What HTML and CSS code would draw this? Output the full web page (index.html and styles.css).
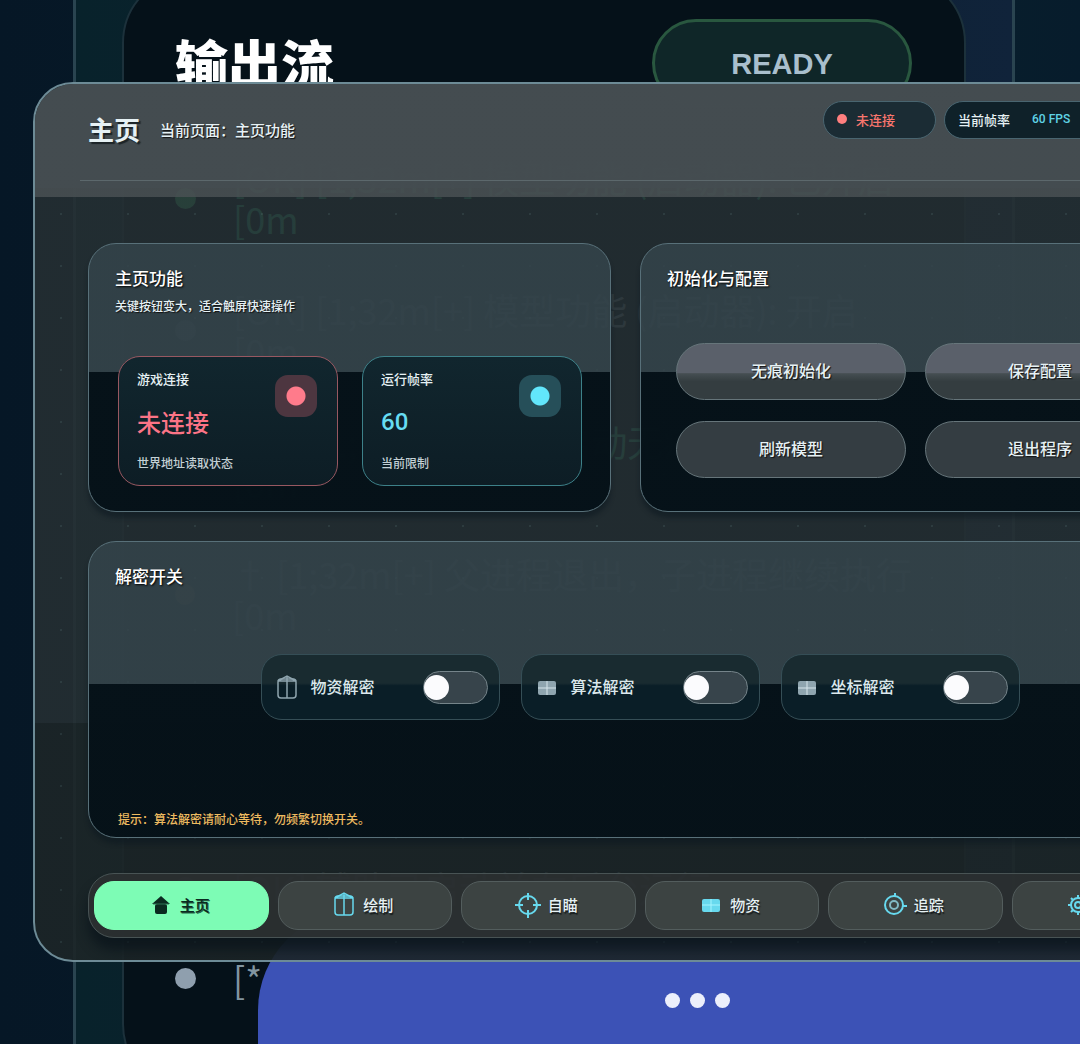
FILE: index.html
```html
<!DOCTYPE html>
<html lang="zh-CN">
<head>
    <meta charset="UTF-8">
    <meta name="viewport" content="width=device-width, initial-scale=1.0">
    <title>主页</title>
    <link rel="stylesheet" href="styles.css">
</head>
<body>
    <div class="stage">
        <!-- 后面的输出窗口 -->
        <div class="backdrop">
            <section class="console">
                <div class="console-head">
                    <h2>输出流</h2>
                    <span class="ready">READY</span>
                </div>
                <ul class="log">
                    <li class="ok"><span>[OK] [1;32m[+] 模型功能 (启动器): 已开启<br>[0m</span></li>
                    <li><span>[OK] [1;32m[+] 模型功能 (启动器): 开启<br>[0m</span></li>
                    <li class="ok"><span>[OK] [1;32m[+] 模型启动无痕<br>[0m</span></li>
                    <li class="warn"><span>† [1;32m[+] 父进程退出，子进程继续执行<br>[0m</span></li>
                    <li><span></span></li>
                    <li><span></span></li>
                    <li><span>[OK] 辅助已启动并在后台运行</span></li>
                    <li><span>[*</span></li>
                </ul>
            </section>
        </div>
        <div class="dock"><i></i><i></i><i></i></div>

        <!-- 主窗口 -->
        <main class="window">
            <header class="window-head">
                <div class="head-row">
                    <h1>主页</h1>
                    <p>当前页面：主页功能</p>
                    <div class="pills">
                        <span class="pill pill-off"><i></i>未连接</span>
                        <span class="pill pill-fps">当前帧率 <b>60 FPS</b></span>
                    </div>
                </div>
            </header>

            <div class="content">
                <div class="cards">
                    <section class="card">
                        <h3>主页功能</h3>
                        <p class="sub">关键按钮变大，适合触屏快速操作</p>
                        <div class="stats">
                            <div class="stat red">
                                <span class="label">游戏连接</span>
                                <strong>未连接</strong>
                                <small>世界地址读取状态</small>
                                <i class="badge"></i>
                            </div>
                            <div class="stat cyan">
                                <span class="label">运行帧率</span>
                                <strong>60</strong>
                                <small>当前限制</small>
                                <i class="badge"></i>
                            </div>
                        </div>
                    </section>

                    <section class="card">
                        <h3>初始化与配置</h3>
                        <div class="actions">
                            <button type="button">无痕初始化</button>
                            <button type="button">保存配置</button>
                            <button type="button">刷新模型</button>
                            <button type="button">退出程序</button>
                        </div>
                    </section>
                </div>

                <section class="card card-switch">
                    <h3>解密开关</h3>
                    <div class="switches">
                        <label class="switch" for="sw1">
                            <svg width="24" height="28" viewBox="0 0 24 28" fill="none" stroke="currentColor" stroke-width="1.5"><rect x="3" y="6" width="18" height="19" rx="3"/><path d="M3 8 12 3l9 5M3 8h18M12 3v22"/></svg>
                            <span>物资解密</span>
                            <input type="checkbox" id="sw1">
                        </label>
                        <label class="switch" for="sw2">
                            <svg width="24" height="28" viewBox="0 0 24 28"><rect x="3" y="8" width="18" height="14" rx="2" fill="currentColor"/><path d="M12 8v14M3 15h18" stroke="#d5e4ea" stroke-width="1"/></svg>
                            <span>算法解密</span>
                            <input type="checkbox" id="sw2">
                        </label>
                        <label class="switch" for="sw3">
                            <svg width="24" height="28" viewBox="0 0 24 28"><rect x="3" y="8" width="18" height="14" rx="2" fill="currentColor"/><path d="M12 8v14M3 15h18" stroke="#d5e4ea" stroke-width="1"/></svg>
                            <span>坐标解密</span>
                            <input type="checkbox" id="sw3">
                        </label>
                    </div>
                    <p class="hint">提示：算法解密请耐心等待，勿频繁切换开关。</p>
                </section>

                <nav class="tabs">
                    <button type="button" class="active">
                        <svg width="24" height="26" viewBox="0 0 24 26" fill="currentColor"><path d="M12 4 21 12H3z"/><rect x="6" y="12" width="12" height="10" rx="2"/><path d="M4 12h16" stroke="#2f7355" stroke-width="1"/></svg>
                        主页
                    </button>
                    <button type="button">
                        <svg width="24" height="26" viewBox="0 0 24 26" fill="none" stroke="currentColor" stroke-width="1.5"><rect x="3" y="4" width="18" height="19" rx="3"/><path d="M3 6 12 1l9 5M3 6h18"/><path d="M12 2v21"/></svg>
                        绘制
                    </button>
                    <button type="button">
                        <svg width="26" height="26" viewBox="0 0 26 26" fill="none" stroke="currentColor" stroke-width="2"><circle cx="13" cy="13" r="9"/><path d="M13 1v7M13 18v8M0 13h8M18 13h8"/></svg>
                        自瞄
                    </button>
                    <button type="button">
                        <svg width="24" height="26" viewBox="0 0 24 26"><rect x="3" y="7" width="18" height="13" rx="2" fill="currentColor"/><path d="M12 7v13M3 13h18" stroke="#a5f4ff" stroke-width="1"/></svg>
                        物资
                    </button>
                    <button type="button">
                        <svg width="24" height="26" viewBox="0 0 24 26" fill="none" stroke="currentColor" stroke-width="2"><circle cx="11" cy="13" r="9"/><circle cx="11" cy="13" r="4" stroke="#82b9c4"/><path d="M12 1v4M19 14h5"/></svg>
                        追踪
                    </button>
                    <button type="button" aria-label="设置">
                        <svg width="24" height="26" viewBox="0 0 24 26" fill="none" stroke="currentColor" stroke-width="2"><circle cx="12" cy="13" r="7"/><circle cx="12" cy="13" r="3"/><path d="M12 3v3M12 20v3M2 13h3M19 13h3M5 6l2 2M17 18l2 2M5 20l2-2M17 8l2-2"/></svg>
                        <span class="blank"></span>
                    </button>
                </nav>
            </div>
        </main>
    </div>
</body>
</html>
```
FILE: styles.css
```css
* {
    box-sizing: border-box;
}
body {
    margin: 0;
    background: #071a29;
    color: #e6f1f4;
    font-family: "Noto Sans CJK SC", sans-serif;
    font-weight: 500;
}
h1, h2, h3, p, ul {
    margin: 0;
    padding: 0;
}
button {
    font-family: inherit;
    font-weight: 500;
    color: inherit;
    cursor: pointer;
}

/* 三层叠在同一个格子里 */
.stage {
    display: grid;
    min-height: 100vh;
    overflow: hidden;
    background: linear-gradient(90deg, #061726, #08202c 80%, #071c2c);
}
.stage > * {
    grid-area: 1 / 1;
    min-width: 0;
}

/* ---------- 输出窗口 ---------- */
.backdrop {
    display: flex;
    margin: 0 65px 0 73px;
    border: solid #2a4450;
    border-width: 0 3px;
    background: linear-gradient(90deg, #08222b, #0c2130 60%, #10233a);
}
.console {
    flex: 1;
    min-width: 0;
    margin: -27px 46px -50px;
    padding: 44px 52px 0 51px;
    border: 2px solid #1c313b;
    border-radius: 70px;
    background: #051119;
}
.console-head {
    display: flex;
    justify-content: space-between;
    height: 88px;
}
.console-head h2 {
    font-size: 53px;
    line-height: 86px;
    font-weight: 900;
    color: #fff;
}
.ready {
    width: 260px;
    height: 88px;
    border: 3px solid #29573f;
    border-radius: 44px;
    background: #0f2628;
    color: #a9bfcd;
    font: bold 29px/84px "Liberation Sans", sans-serif;
    text-align: center;
}
.log {
    display: flex;
    flex-direction: column;
    gap: 50px;
    margin-top: 50px;
    list-style: none;
    color: #8295a0;
    font-size: 36px;
    line-height: 41px;
    font-weight: 400;
    white-space: nowrap;
}
.log li {
    display: flex;
    align-items: center;
    gap: 37px;
    min-height: 41px;
}
.log li::before {
    content: "";
    width: 21px;
    height: 21px;
    border-radius: 50%;
    background: #8f9fae;
}
.log .ok {
    color: #3ccb8e;
}
.log .ok::before {
    background: #4ade80;
}
.log .warn::before {
    background: #c08a4a;
}
.log li:nth-child(3)::before,
.log li:nth-child(5)::before,
.log li:nth-child(6)::before {
    background: none;
}

.dock {
    align-self: end;
    display: flex;
    justify-content: center;
    gap: 10px;
    height: 134px;
    margin: 0 -56px 0 258px;
    padding-top: 83px;
    border-radius: 100px 100px 0 0;
    background: #3c52b6;
}
.dock i {
    width: 15px;
    height: 15px;
    border-radius: 50%;
    background: #eceffb;
}

/* ---------- 主窗口 ---------- */
.window {
    margin: 82px -167px 82px 33px;
    border: 2px solid #6d8b96;
    border-radius: 40px;
    overflow: hidden;
    background:
        radial-gradient(circle at 26px 26px, rgba(150, 200, 200, .1) 1px, transparent 1px) 0 0 / 67px 52px,
        linear-gradient(rgba(36, 46, 50, .9) 73%, rgba(28, 37, 39, .9) 73%);
}
.window-head {
    height: 113px;
    padding: 0 45px;
    background: linear-gradient(rgba(69, 77, 81, .97) 92%, rgba(74, 81, 84, .83) 92%);
}
.head-row {
    display: flex;
    align-items: center;
    gap: 20px;
    height: 97px;
    padding: 0 8px;
    border-bottom: 1px solid #5c686c;
}
.head-row h1 {
    margin-bottom: 6px;
    font-size: 26px;
    line-height: 36px;
    text-shadow: 2px 2px 1px #1c2427;
}
.head-row p {
    margin-bottom: 4px;
    font-size: 15px;
    line-height: 20px;
    text-shadow: 1px 1px 1px #111;
}
.pills {
    display: flex;
    gap: 8px;
    align-self: flex-start;
    width: 369px;
    margin: 17px 0 0 auto;
}
.pill {
    display: flex;
    align-items: center;
    height: 38px;
    padding: 0 13px 2px;
    border: 1px solid #496570;
    border-radius: 19px;
    background: #1b2c34;
    font-size: 13px;
}
.pill-off {
    width: 113px;
    gap: 9px;
    color: #f9766e;
}
.pill-off i {
    width: 10px;
    height: 10px;
    border-radius: 50%;
    background: #ff7f7f;
}
.pill-fps {
    flex: 1;
    gap: 22px;
    background: #0f2129;
}
.pill-fps b {
    color: #5fd3e6;
    font: 500 12px Roboto, sans-serif;
}

.content {
    padding: 46px 53px 22px;
}
.cards {
    display: grid;
    grid-template-columns: 523fr 552fr;
    gap: 29px;
}
.card {
    min-height: 269px;
    padding: 22px 26px;
    border: 1px solid #587079;
    border-radius: 28px;
    background: linear-gradient(rgba(52, 68, 75, .84) 48%, rgba(5, 17, 24, .97) 48%);
    box-shadow: 0 6px 4px rgba(12, 24, 32, .5);
}
.card h3 {
    font-size: 17px;
    line-height: 24px;
    font-weight: 500;
    color: #fff;
    text-shadow: 1px 1px 2px #000;
}
.sub {
    margin-top: 6px;
    font-size: 12px;
    line-height: 20px;
    text-shadow: 1px 1px 1px #111;
}
.stats {
    display: grid;
    grid-template-columns: 1fr 1fr;
    gap: 24px;
    margin: 40px 2px 0 3px;
}
.stat {
    position: relative;
    display: flex;
    flex-direction: column;
    height: 130px;
    padding: 12px 18px;
    border: 1px solid;
    border-radius: 22px;
    background: linear-gradient(#11262e, #0d1d25);
}
.stat .label {
    font-size: 13px;
    line-height: 20px;
}
.stat strong {
    margin-top: 17px;
    font-size: 24px;
    line-height: 32px;
    font-weight: 500;
}
.stat small {
    margin-top: 17px;
    font-size: 12px;
    line-height: 16px;
    color: #c3d0d5;
}
.badge {
    position: absolute;
    top: 18px;
    right: 20px;
    width: 42px;
    height: 42px;
    border-radius: 13px;
}
.stat.red {
    border-color: #985861;
}
.stat.red strong {
    color: #fb7486;
}
.red .badge {
    background: radial-gradient(circle, #ff7b8b 9px, #4d3640 10px);
}
.stat.cyan {
    border-color: #3d8189;
}
.stat.cyan strong {
    color: #66dcf2;
    font-family: Roboto, sans-serif;
}
.cyan .badge {
    background: radial-gradient(circle, #62e6fb 9px, #264f59 10px);
}

.actions {
    display: grid;
    grid-template-columns: 1fr 1fr;
    gap: 21px 19px;
    margin: 53px 10px 0 9px;
}
.actions button {
    height: 57px;
    padding: 0 0 4px;
    border: 1px solid #66757a;
    border-radius: 29px;
    background: #343d42;
    font-size: 16px;
    text-shadow: 1px 1px 1px #111;
}
/* 第一行按钮压在高光上 */
.actions button:nth-child(-n+2) {
    background: linear-gradient(#5a606a 52%, #454e52 54%, #343d40 68%);
}

.card-switch {
    display: flex;
    flex-direction: column;
    min-height: 297px;
    margin-top: 29px;
    padding-bottom: 8px;
}
.switches {
    display: flex;
    justify-content: center;
    gap: 21px;
    margin-top: 66px;
}
.switch {
    display: flex;
    align-items: center;
    width: 239px;
    height: 66px;
    padding: 0 11px 0 13px;
    border: 1px solid #354e56;
    border-radius: 21px;
    background: linear-gradient(#192b30 44%, #0a1e27 48%);
    font-size: 16px;
    color: #dbe8ec;
}
.switch svg {
    margin-right: 12px;
    color: #8fa5af;
}
.switch span {
    margin-bottom: 2px;
}
.switch input {
    appearance: none;
    width: 65px;
    height: 33px;
    margin: 0 0 0 auto;
    border: 1px solid #75848a;
    border-radius: 17px;
    background: #37444b;
}
.switch input::before {
    content: "";
    display: block;
    width: 25px;
    height: 25px;
    margin-top: 3px;
    border-radius: 50%;
    background: #fbfbfd;
}
.switch input:checked::before {
    margin-left: 38px;
}
.hint {
    margin: auto 3px 0;
    font-size: 12px;
    line-height: 20px;
    color: #eebb60;
}

.tabs {
    display: grid;
    grid-template-columns: repeat(6, 1fr);
    gap: 9px;
    margin-top: 35px;
    padding: 7px 5px;
    border: 1px solid #485354;
    border-radius: 26px;
    background: rgba(43, 48, 49, .9);
    box-shadow: 0 12px 12px rgba(8, 18, 26, .7);
}
.tabs button {
    display: flex;
    align-items: center;
    justify-content: center;
    gap: 7px;
    height: 49px;
    padding: 0 4px 2px 0;
    border: 1px solid #535d5d;
    border-radius: 20px;
    background: rgba(65, 72, 71, .8);
    font-size: 15px;
    text-shadow: 1px 2px 1px #161b1c;
}
.tabs svg {
    color: #67d9ee;
}
.tabs .blank {
    width: 30px;
}
.tabs .active,
.tabs .active svg {
    color: #0b2a20;
}
.tabs .active {
    border-color: #7fffb5;
    background: #7dfcb5;
    text-shadow: 1px 1px #2a6a4c;
}
```
